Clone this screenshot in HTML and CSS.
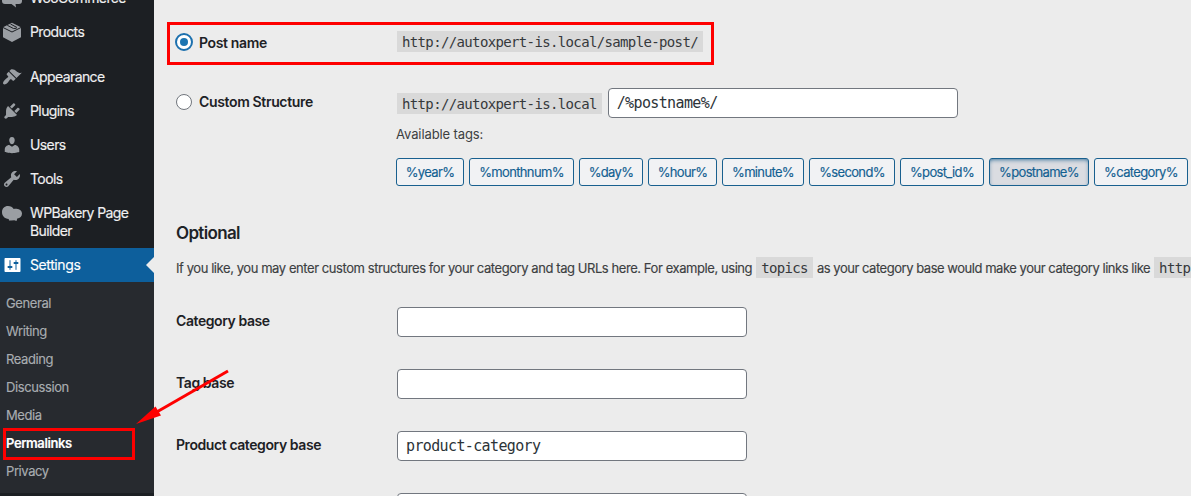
FILE: index.html
```
<!DOCTYPE html>
<html lang="en">
<head>
<meta charset="utf-8">
<title>Permalink Settings</title>
<link rel="stylesheet" href="styles.css">
</head>
<body>
<div class="app">
  <nav class="sidebar">
    <a class="item"><svg class="icon" viewBox="0 0 20 20"><path d="M3 1h14q3 0 3 3v9q0 3-3 3h-3.500l.5 3.500-4.500-3.500H3q-3 0-3-3V4q0-3 3-3z"/></svg><span>WooCommerce</span></a>
    <a class="item"><svg class="icon" viewBox="0 0 20 20"><path d="M10 .7l9 4.500v10L10 20l-9-4.800v-10z"/><path class="line" d="M1 5.500l9 4.500 9-4.500M5.300 3.300l6.200 3.200 3-.2M8.500 2l6.500 3.500"/></svg><span>Products</span></a>
    <div class="separator"></div>
    <a class="item"><svg class="icon" viewBox="0 0 20 20"><path d="M14.480 11.060L7.410 3.990l1.500-1.500c.5-.56 2.300-.47 3.510.32 1.210.8 1.430 1.280 2.910 2.100 1.180.64 2.450 1.260 4.450.85zm-.71.71L6.700 4.700 4.930 6.470c-.39.39-.39 1.020 0 1.410l1.060 1.060c.39.39.39 1.030 0 1.420-.6.6-1.430 1.110-2.210 1.690-.35.26-.7.53-1.010.84C1.430 14.230.4 16.080 1.400 17.070c.99 1 2.840-.03 4.180-1.360.31-.31.58-.66.85-1.020.57-.78 1.080-1.610 1.690-2.210.39-.39 1.020-.39 1.410 0l1.060 1.060c.39.39 1.020.39 1.410 0z"/></svg><span>Appearance</span></a>
    <a class="item"><svg class="icon" viewBox="0 0 20 20"><path d="M13.110 4.360L9.870 7.600 8 5.730l3.240-3.240c.35-.34 1.050-.2 1.560.32.52.51.66 1.210.31 1.550zm-8 1.770l.91-1.120 9.010 9.010-1.190.84c-.71.71-2.630 1.160-3.820 1.160H6.140L4.900 17.260c-.59.59-1.540.59-2.120 0-.59-.58-.59-1.530 0-2.120l1.240-1.240v-3.880c0-1.130.4-3.190 1.090-3.890zm7.260 3.970l3.240-3.240c.34-.35 1.040-.21 1.550.31.52.51.66 1.210.31 1.550l-3.240 3.250z"/></svg><span>Plugins</span></a>
    <a class="item"><svg class="icon" viewBox="0 0 20 20"><path d="M10 9.250c-2.270 0-2.730-3.440-2.730-3.440C7 4.020 7.820 2 9.970 2c2.160 0 2.980 2.020 2.710 3.810 0 0-.41 3.440-2.680 3.440zm0 2.570L12.720 10c2.390 0 4.520 2.330 4.520 4.530v2.490s-3.650 1.130-7.240 1.130c-3.650 0-7.240-1.130-7.240-1.130v-2.490c0-2.250 1.940-4.480 4.470-4.480z"/></svg><span>Users</span></a>
    <a class="item"><svg class="icon" viewBox="0 0 20 20"><path d="M16.680 9.770c-1.340 1.340-3.300 1.670-4.950.99l-5.410 6.520c-.99.99-2.590.99-3.580 0s-.99-2.590 0-3.570l6.520-5.420c-.68-1.650-.35-3.610.99-4.950 1.280-1.280 3.120-1.620 4.720-1.060l-2.890 2.890 2.820 2.820 2.860-2.870c.53 1.580.18 3.390-1.080 4.650zM3.810 16.210c.4.39 1.040.39 1.430 0 .4-.4.4-1.040 0-1.430-.39-.4-1.030-.4-1.430 0-.39.39-.39 1.030 0 1.430z"/></svg><span>Tools</span></a>
    <a class="item tall"><svg class="icon" viewBox="0 0 20 20"><path d="M6 3c2.500 0 4.600 1.200 5.700 3 1-.3 1.700-.4 2.800-.3C17.800 5.900 20 7.800 20 10.600c0 2.700-2 4.700-4.700 4.900l-.8 2.600-2.200-.8-3.300.2-2-.1-.3-1.500C2.500 15.600 0 12.800 0 9.200 0 5.500 2.500 3 6 3z"/></svg><span>WPBakery Page Builder</span></a>
    <a class="item current"><svg class="icon" viewBox="-.5 0 20 20"><path d="M18 16V4c0-.55-.45-1-1-1H3c-.55 0-1 .45-1 1v12c0 .55.45 1 1 1h14c.55 0 1-.45 1-1zM8 11h1c.55 0 1 .45 1 1s-.45 1-1 1H8v1.500c0 .28-.22.5-.5.5s-.5-.22-.5-.5V13H6c-.55 0-1-.45-1-1s.45-1 1-1h1V5.500c0-.28.22-.5.5-.5s.5.22.5.5V11zm5-2h-1c-.55 0-1-.45-1-1s.45-1 1-1h1V5.500c0-.28.22-.5.5-.5s.5.22.5.5V7h1c.55 0 1 .45 1 1s-.45 1-1 1h-1v5.500c0 .28-.22.5-.5.5s-.5-.22-.5-.5V9z"/></svg><span>Settings</span></a>
    <div class="submenu">
      <a>General</a><a>Writing</a><a>Reading</a><a>Discussion</a><a>Media</a><a class="active">Permalinks</a><a>Privacy</a>
    </div>
  </nav>
  <main class="content">
    <div class="row option">
      <label class="choice"><span class="radio checked"></span>Post name</label>
      <code>http://autoxpert-is.local/sample-post/</code>
    </div>
    <div class="row custom">
      <label class="choice"><span class="radio"></span>Custom Structure</label>
      <code>http://autoxpert-is.local</code>
      <div class="field">/%postname%/</div>
    </div>
    <div class="available">Available tags:</div>
    <div class="tags">
      <span class="tag">%year%</span><span class="tag">%monthnum%</span><span class="tag">%day%</span><span class="tag">%hour%</span><span class="tag">%minute%</span><span class="tag">%second%</span><span class="tag">%post_id%</span><span class="tag pressed">%postname%</span><span class="tag">%category%</span>
    </div>
    <h2>Optional</h2>
    <p class="intro"><span>If you like, you may enter custom structures for your category and tag URLs here. For example, using</span><code>topics</code><span class="rest">as your category base would make your category links like</span><code>http</code></p>
    <div class="form">
      <div class="row"><label>Category base</label><div class="field"></div></div>
      <div class="row"><label>Tag base</label><div class="field"></div></div>
      <div class="row"><label>Product category base</label><div class="field">product-category</div></div>
      <div class="row"><label></label><div class="field"></div></div>
    </div>
  </main>
  <svg class="annotations" viewBox="0 0 1191 496"><rect x="168.500" y="23.500" width="544" height="40"/><rect x="4.500" y="429.500" width="129" height="29"/><path d="M228 371L155 413"/><path class="head" d="M136 424l19.500-17.500 5.500 9z"/></svg>
</div>
</body>
</html>
```
FILE: styles.css
```
* { box-sizing: border-box; }
body { margin: 0; background: #ececec; color: #3c3f42; font-family: Inter, "Liberation Sans", sans-serif; font-size: 13px; }
.app { position: relative; display: flex; width: 1191px; height: 496px; overflow: hidden; }
.sidebar { flex: 0 0 154px; margin-top: -19px; height: 515px; background: #1c1f23; }
.item { position: relative; display: flex; height: 34px; padding: 8px 0 0 2px; gap: 8px; color: #f0f0f1; font-size: 14px; line-height: 18px; letter-spacing: -.6px; -webkit-text-stroke: .15px; }
.item.tall { height: 52px; }
.icon { flex: 0 0 20px; width: 20px; height: 20px; margin-top: -1px; fill: #9a9ea3; }
.line { fill: none; stroke: #1c1f23; stroke-width: 1; }
.separator { height: 11px; }
.current { background: #0d5f9c; color: #fff; letter-spacing: -.4px; }
.current .icon { fill: #fff; }
.current::after { content: ""; position: absolute; right: 0; top: 9px; border: 8px solid transparent; border-left: 0; border-right-color: #ececec; }
.submenu { display: flex; flex-direction: column; height: 211px; padding: 7px 6px; background: #272a2f; }
.submenu a { height: 28px; line-height: 28px; color: #a9adb1; letter-spacing: -.4px; -webkit-text-stroke: .15px; }
.submenu .active { color: #fff; font-weight: 600; }
.content { flex: 1; min-width: 0; padding: 27px 0 0 22px; overflow: hidden; }
.row { display: flex; align-items: center; height: 30px; }
.row label { flex: 0 0 221px; padding-bottom: 3px; color: #1d2125; font-size: 14px; font-weight: 600; letter-spacing: -.42px; }
.row .choice { display: flex; align-items: center; gap: 7px; height: 18px; padding-bottom: 0; letter-spacing: -.35px; }
.radio { width: 16px; height: 16px; border: 1px solid #71767d; border-radius: 50%; background: #fff; }
.radio.checked { display: grid; place-items: center; width: 18px; height: 18px; margin: 0 -1px; border: 2px solid #1c70ae; }
.radio.checked::after { content: ""; width: 8px; height: 8px; border-radius: 50%; background: #1c75b2; }
code { height: 21px; padding: 0 5px; background: #d9d9d9; color: #35383b; font: 14px/23px "DejaVu Sans Mono", monospace; letter-spacing: -.64px; white-space: nowrap; }
.option code { margin-top: -2px; }
.field { width: 350px; height: 30px; padding: 0 8px; border: 1px solid #72777f; border-radius: 4px; background: #fff; color: #2c3338; font: 15px/28px "DejaVu Sans Mono", monospace; letter-spacing: -.63px; }
.custom { margin-top: 31px; }
.custom .choice { margin-top: -3px; }
.custom .field { margin-left: 6px; }
.available { margin: 7px 0 0 220px; height: 18px; line-height: 18px; letter-spacing: -.1px; }
.tags { display: flex; gap: 5px; margin: 15px 0 0 220px; }
.tag { flex: 0 0 auto; height: 28px; border: 1px solid #19608f; border-radius: 3px; background: #f1f2f4; color: #126091; line-height: 27px; text-align: center; letter-spacing: -.65px; -webkit-text-stroke: .15px; }
.tag:nth-child(1) { width: 68px; }
.tag:nth-child(2) { width: 105px; }
.tag:nth-child(3) { width: 64px; }
.tag:nth-child(4) { width: 69px; }
.tag:nth-child(5) { width: 82px; }
.tag:nth-child(6) { width: 86px; }
.tag:nth-child(7) { width: 84px; }
.tag:nth-child(8) { width: 100px; }
.tag:nth-child(9) { width: 94px; }
.tag.pressed { background: #dadce1; box-shadow: inset 0 2px 5px -2px #075284; }
h2 { margin: 37px 0 0; height: 20px; color: #1d2327; font-size: 17px; font-weight: 600; line-height: 20px; letter-spacing: -.65px; }
.intro { display: flex; align-items: center; height: 21px; margin: 14px 0 0; white-space: nowrap; letter-spacing: -.43px; -webkit-text-stroke: .15px; }
.intro code { margin: 0 4px; -webkit-text-stroke: 0; }
.rest { letter-spacing: -.47px; }
.form { display: grid; grid-auto-rows: 30px; row-gap: 32px; margin-top: 29px; }
.annotations { position: absolute; left: 0; top: 0; width: 1191px; height: 496px; fill: none; stroke: #fe0000; stroke-width: 3; }
.annotations .head { fill: #fe0000; stroke: none; }
```
